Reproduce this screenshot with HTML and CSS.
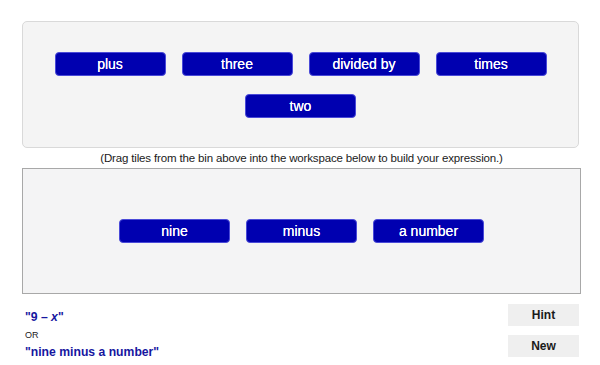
FILE: index.html
```html
<!DOCTYPE html>
<html>
<head>
<meta charset="utf-8">
<link rel="stylesheet" href="styles.css">
</head>
<body>
<div class="page">
  <div class="bin">
    <div class="row">
      <div class="tile">plus</div>
      <div class="tile">three</div>
      <div class="tile">divided by</div>
      <div class="tile">times</div>
    </div>
    <div class="row">
      <div class="tile">two</div>
    </div>
  </div>
  <div class="instr">(Drag tiles from the bin above into the workspace below to build your expression.)</div>
  <div class="workspace">
    <div class="row">
      <div class="tile">nine</div>
      <div class="tile">minus</div>
      <div class="tile">a number</div>
    </div>
  </div>
  <div class="bottom">
    <div class="answers">
      <div class="ans">"9 &ndash; <i>x</i>"</div>
      <div class="or">OR</div>
      <div class="ans">"nine minus a number"</div>
    </div>
    <div class="buttons">
      <div class="btn">Hint</div>
      <div class="btn">New</div>
    </div>
  </div>
</div>
</body>
</html>
```

FILE: styles.css
```css
html, body {
  margin: 0;
  padding: 0;
  background: #fff;
}
body {
  font-family: "Liberation Sans", Arial, sans-serif;
  color: #222;
}
.page {
  width: 559px;
  padding: 21px 0 0 22px;
}
.bin {
  width: 555px;
  background: #f4f4f4;
  border: 1px solid #d9d9d9;
  border-radius: 5px;
  padding: 30px 0 29px;
  display: flex;
  flex-direction: column;
  gap: 18px;
}
.row {
  display: flex;
  justify-content: center;
  gap: 16px;
}
.tile {
  width: 109px;
  height: 22px;
  background: #0000b0;
  border: 1px solid #4a4ad8;
  border-radius: 4px;
  color: #fff;
  font-size: 14px;
  line-height: 22px;
  text-align: center;
  text-shadow: 0 0 0.4px #fff;
}
.instr {
  font-size: 11.5px;
  letter-spacing: -0.15px;
  text-align: center;
  height: 20px;
  line-height: 21px;
  color: #1a1a1a;
  width: 559px;
}
.workspace {
  width: 557px;
  height: 124px;
  background: #f4f4f5;
  border: 1px solid #a8a8a8;
  display: flex;
  flex-direction: column;
  justify-content: center;
}
.bottom {
  display: flex;
  justify-content: space-between;
  padding-top: 10px;
}
.answers {
  padding: 6px 0 0 3px;
  display: flex;
  flex-direction: column;
}
.ans {
  font-size: 12.2px;
  font-weight: bold;
  color: #1616a0;
  line-height: 15px;
}
.or {
  font-size: 9px;
  line-height: 20px;
  color: #222;
}
.buttons {
  display: flex;
  flex-direction: column;
  gap: 9px;
  margin-right: 2px;
}
.btn {
  width: 71px;
  height: 22px;
  background: #efefef;
  font-size: 12px;
  font-weight: bold;
  line-height: 22px;
  text-align: center;
  color: #1a1a1a;
}
```
